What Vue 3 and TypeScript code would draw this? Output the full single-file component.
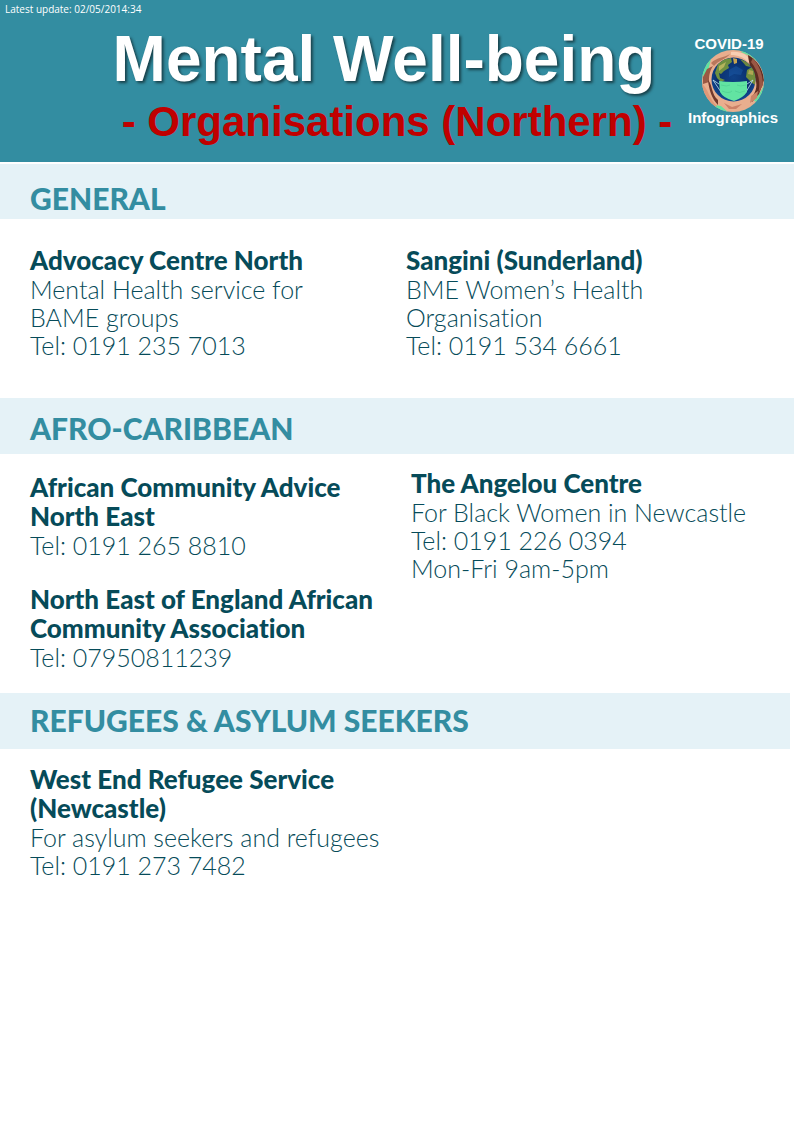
<script setup lang="ts">
interface Organisation {
  name: string[]
  details: string[]
}

interface Section {
  id: string
  title: string
  columns: Organisation[][]
}

const sections: Section[] = [
  {
    id: 'general',
    title: 'GENERAL',
    columns: [
      [
        {
          name: ['Advocacy Centre North'],
          details: ['Mental Health service for', 'BAME groups', 'Tel: 0191 235 7013'],
        },
      ],
      [
        {
          name: ['Sangini (Sunderland)'],
          details: ['BME Women’s Health', 'Organisation', 'Tel: 0191 534 6661'],
        },
      ],
    ],
  },
  {
    id: 'afro-caribbean',
    title: 'AFRO-CARIBBEAN',
    columns: [
      [
        { name: ['African Community Advice', 'North East'], details: ['Tel: 0191 265 8810'] },
        {
          name: ['North East of England African', 'Community Association'],
          details: ['Tel: 07950811239'],
        },
      ],
      [
        {
          name: ['The Angelou Centre'],
          details: ['For Black Women in Newcastle', 'Tel: 0191 226 0394', 'Mon-Fri 9am-5pm'],
        },
      ],
    ],
  },
  {
    id: 'refugees',
    title: 'REFUGEES & ASYLUM SEEKERS',
    columns: [
      [
        {
          name: ['West End Refugee Service', '(Newcastle)'],
          details: ['For asylum seekers and refugees', 'Tel: 0191 273 7482'],
        },
      ],
    ],
  },
]
</script>

<template>
  <div class="page">
    <header class="header">
      <p class="updated">Latest update: 02/05/2014:34</p>
      <div class="banner">
        <div class="titles">
          <h1 class="title">Mental Well-being</h1>
          <p class="subtitle">- Organisations (Northern) -</p>
        </div>
        <div class="logo">
          <span>COVID-19</span>
          <svg class="emblem" viewBox="0 0 64 64" aria-hidden="true">
            <defs>
              <radialGradient id="ocean" cx="50%" cy="45%" r="55%">
                <stop offset="0" stop-color="#0f4288" />
                <stop offset="0.7" stop-color="#0a2f6e" />
                <stop offset="1" stop-color="#124a94" />
              </radialGradient>
              <clipPath id="disc"><circle cx="32" cy="32" r="31" /></clipPath>
              <clipPath id="globe"><circle cx="32.5" cy="30.5" r="22" /></clipPath>
            </defs>
            <g clip-path="url(#disc)">
              <rect width="64" height="64" fill="#e9ae8e" />
              <path d="M44 0 L56 6 L55 12 L49 7 L40 3 Z" fill="#5fe3a1" />
              <path d="M2 15 L10 10 L7 22 L1 28 Z" fill="#5fe3a1" />
              <path d="M14 56 L20 57 L28 64 L14 64 Z" fill="#5fe3a1" />
              <path d="M64 34 L60 42 L53 52 L60 54 L64 44 Z" fill="#5fe3a1" />
              <path d="M10 14 C16 8 23 9 29 5 C25 10 18 11 13 17 Z" fill="#b9775c" />
              <path d="M30 3 C40 2 47 6 50 12 L47 13 C42 8 37 6 30 6 Z" fill="#f7ceb3" />
              <path d="M6 20 L12 17 C8 23 8 28 8 33 L2 35 L2 28 Z" fill="#9a5843" />
              <path d="M7 31 C12 37 10 45 17 51 L17 56 C11 50 8 41 7 31 Z" fill="#71382d" />
              <path d="M1 35 C7 39 8 50 16 57 L12 59 C4 52 0 43 1 35 Z" fill="#df9878" />
              <path d="M47 6 C56 11 62 20 63 31 L58 45 L51 53 L50 49 C56 42 57 35 53 26 C50 19 48 16 47 6 Z" fill="#5d2c21" />
              <path d="M52 9 C57 15 62 24 62 36 L57 45 C60 34 58 23 50 13 Z" fill="#9a5744" />
              <path d="M50 47 L57 42 L56 49 L49 54 Z" fill="#c98467" />
              <path d="M23 54 L31 58 L41 55 L35 60 L28 60 Z" fill="#cc8167" />
            </g>
            <circle cx="32.5" cy="30.5" r="22" fill="url(#ocean)" />
            <g clip-path="url(#globe)">
              <path d="M17 15 L23 10 L30 9 L31 13 L27 16 L28 19 L23 22 L20 25 L18 24 L19 29 L24 31 L20 33 L16 29 L14 24 Z" fill="#6f9040" />
              <path d="M18 17 L25 13 L23 18 L18 22 Z" fill="#b5b45c" />
              <path d="M32 9 L36 10 L36 14 L33 15 Z" fill="#c9a550" />
              <path d="M39 10 L46 13 L50 18 L45 17 Z" fill="#6b8640" />
              <path d="M46 21 L51 18 L56 26 L54 36 L50 33 L45 28 Z" fill="#718f3d" />
              <path d="M48 21 L52 22 L52 26 L47 25 Z" fill="#b0a654" />
              <path d="M28 21 L35 17 L42 21 L40 26 L33 25 L28 28 Z" fill="#1c5dab" opacity="0.45" />
            </g>
            <path d="M12 31 L18 35 M12 31 L20 43 M52 31 L46 35 M52 31 L45 43" fill="none" stroke="#bfe3f2" stroke-width="0.8" />
            <path d="M18 32 Q32 34 46 32 L46 43 Q42 49 33 52 Q22 49 19 43 Z" fill="#62e4a2" />
            <path d="M20 36 Q26 38 29 36 M45 36 Q39 38 36 36 M21 42 Q28 45 31 42 M44 42 Q38 45 34 42" fill="none" stroke="#4ccb90" stroke-width="0.6" />
          </svg>
          <span>Infographics</span>
        </div>
      </div>
    </header>

    <main>
      <section v-for="section in sections" :key="section.id" :class="['section', section.id]">
        <h2 class="band">{{ section.title }}</h2>
        <div class="columns">
          <div v-for="(column, c) in section.columns" :key="c" class="column">
            <article v-for="org in column" :key="org.name[0]" class="organisation">
              <h3 class="name">
                <span v-for="line in org.name" :key="line" class="line">{{ line }}</span>
              </h3>
              <p v-for="line in org.details" :key="line" class="detail">{{ line }}</p>
            </article>
          </div>
        </div>
      </section>
    </main>
  </div>
</template>

<style>
body {
  margin: 0;
  background: #fff;
}
</style>

<style scoped>
.page {
  font-family: Lato, "Open Sans", sans-serif;
  font-variant-ligatures: none;
  color: #064b59;
}

h1,
h2,
h3,
p {
  margin: 0;
}

.header {
  background: #338da1;
  color: #fff;
  padding-bottom: 13px;
  border-bottom: 2px solid #fff;
}

.updated {
  padding: 2px 5px 0;
  font: 400 10px/14px "Open Sans", sans-serif;
}

.banner {
  display: flex;
  align-items: flex-start;
  padding: 8px 16px 0 0;
  font-family: "Liberation Sans", Arial, sans-serif;
  font-weight: 700;
}

.titles {
  flex: 1;
  text-align: center;
  white-space: nowrap;
}

.title {
  padding-left: 80px;
  font-size: 64px;
  line-height: 71px;
  text-shadow: 2px 2px 3px rgba(0, 0, 0, 0.55);
}

.subtitle {
  padding-left: 106px;
  font-size: 42px;
  line-height: 54px;
  color: #c00000;
}

.logo {
  display: flex;
  flex-direction: column;
  align-items: center;
  width: 90px;
  padding-top: 12px;
  font-size: 15px;
  line-height: 16px;
}

.logo span:first-child {
  padding-right: 8px;
}

.emblem {
  width: 64px;
  height: 64px;
  margin: -3px 0;
}

.band {
  padding: 12px 30px 8px;
  background: #e5f2f7;
  color: #338da1;
  font-size: 30px;
  font-weight: 900;
  line-height: 36px;
}

.columns {
  display: grid;
  grid-template-columns: 376fr 388fr;
  padding-left: 30px;
}

.name {
  font-size: 26px;
  font-weight: 900;
  line-height: 29px;
}

.line {
  display: block;
}

.detail {
  font-size: 25px;
  font-weight: 300;
  line-height: 28px;
}

.organisation + .organisation {
  margin-top: 26px;
}

.general .band {
  padding-top: 16px;
  padding-bottom: 3px;
}

.general .columns {
  padding-top: 27px;
  padding-bottom: 39px;
}

.afro-caribbean .columns {
  padding-top: 15px;
  padding-bottom: 22px;
}

.afro-caribbean .column:first-child {
  padding-top: 4px;
}

.afro-caribbean .column + .column {
  padding-left: 5px;
}

.refugees .band {
  margin-right: 4px;
  padding-top: 9px;
  padding-bottom: 11px;
}

.refugees .columns {
  padding-top: 16px;
}
</style>
